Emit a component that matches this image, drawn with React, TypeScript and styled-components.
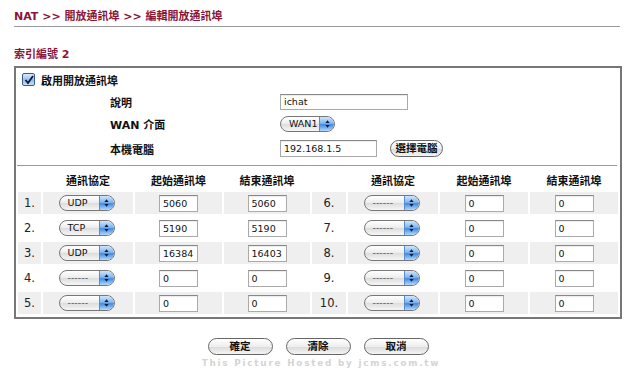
import React from 'react';
import styled, { createGlobalStyle } from 'styled-components';

const Global = createGlobalStyle`
  html, body {
    margin: 0;
    padding: 0;
    background: #fff;
  }
  body {
    font-family: "DejaVu Sans", "Noto Sans CJK TC", sans-serif;
    font-size: 11px;
    color: #111;
  }
`;

const Page = styled.div`
  width: 608px;
  padding: 9px 0 0 14px;
`;

const Title = styled.div`
  font-size: 11px;
  font-weight: bold;
  color: #8b1538;
  height: 15px;
  line-height: 15px;
  padding-bottom: 2px;
  border-bottom: 1px solid #9a9a9a;
  width: 606px;
`;

const SectionTitle = styled.div`
  margin-top: 20px;
  font-size: 11px;
  font-weight: bold;
  color: #8b1538;
  height: 15px;
  line-height: 15px;
`;

const Box = styled.div`
  margin-top: 4px;
  border: 2px solid #777;
`;

const CheckRow = styled.label`
  display: flex;
  align-items: center;
  gap: 6px;
  height: 23px;
  padding-left: 6px;
  font-weight: bold;
`;

const CheckBox = styled.span`
  width: 11px;
  height: 11px;
  border: 1px solid #3b5c8a;
  border-radius: 2px;
  background: linear-gradient(#d9ebfd, #8fbcec 55%, #c5e0fb);
  display: inline-flex;
  align-items: center;
  justify-content: center;
`;

const FormRow = styled.div<{ $h: number }>`
  display: flex;
  align-items: center;
  height: ${p => p.$h}px;
  padding-left: 94px;
`;

const Label = styled.div`
  width: 170px;
  font-weight: bold;
`;

const TextInput = styled.div<{ $w: number; $h?: number }>`
  width: ${p => p.$w}px;
  height: ${p => p.$h ?? 16}px;
  box-sizing: border-box;
  border: 1px solid #aaa;
  border-top-color: #888;
  background: #fff;
  font-size: 9.5px;
  line-height: ${p => (p.$h ?? 16) - 2}px;
  padding-left: 3px;
  text-align: left;
  box-shadow: inset 0 1px 1px rgba(0, 0, 0, 0.08);
`;

const Pill = styled.div<{ $w: number; $muted: boolean }>`
  position: relative;
  width: ${p => p.$w}px;
  height: 16px;
  box-sizing: border-box;
  border: 1px solid #777;
  border-radius: 8px;
  background: linear-gradient(#ffffff, #ececec 50%, #dcdcdc 51%, #f6f6f6);
  font-size: 9.5px;
  line-height: 14px;
  text-align: left;
  padding-left: 8px;
  overflow: hidden;
  white-space: nowrap;
  color: ${p => (p.$muted ? '#555' : '#111')};
`;

const Cap = styled.span`
  position: absolute;
  top: 0;
  right: 0;
  width: 14px;
  height: 14px;
  border-left: 1px solid #5a8ccc;
  border-radius: 0 7px 7px 0;
  background: linear-gradient(#cfe6fc, #7fb6f0 45%, #3f8ae2 55%, #b3d9fc);
  display: flex;
  align-items: center;
  justify-content: center;
`;

const AquaButton = styled.button<{ $w?: number }>`
  width: ${p => p.$w ?? 65}px;
  height: 17px;
  padding: 0;
  border: 1px solid #666;
  border-radius: 9px;
  background: linear-gradient(#ffffff, #eeeeee 50%, #dadada 51%, #f4f4f4);
  font-family: "DejaVu Sans", "Noto Sans CJK TC", sans-serif;
  font-size: 10.5px;
  font-weight: bold;
  color: #111;
  line-height: 15px;
`;

const Separator = styled.div`
  margin: 3px 3px 0 1px;
  border-top: 1px solid #999;
`;

const PortTable = styled.table`
  width: 604px;
  border-collapse: separate;
  border-spacing: 2px 3px;
  margin-top: 1px;
  table-layout: fixed;
`;

const Head = styled.th`
  height: 19px;
  font-weight: bold;
  font-size: 11px;
  text-align: center;
  padding: 0;
`;

const Cell = styled.td<{ $shade: boolean }>`
  height: 22px;
  padding: 0;
  background: ${p => (p.$shade ? '#efefef' : '#fff')};
  text-align: center;
  vertical-align: middle;
`;

const Num = styled.span`
  font-size: 11.5px;
  color: #222;
`;

const CellInner = styled.div<{ $shift?: number }>`
  display: flex;
  justify-content: center;
  margin-left: ${p => p.$shift ?? 0}px;
`;

const ButtonBar = styled.div`
  width: 608px;
  display: flex;
  justify-content: center;
  gap: 13px;
  margin-top: 19px;
`;

const Watermark = styled.div`
  width: 608px;
  text-align: center;
  margin-top: 3px;
  padding-left: 6px;
  box-sizing: border-box;
  font-size: 8.8px;
  font-weight: bold;
  letter-spacing: 1.8px;
  color: #d4d4d4;
`;

const Arrows = () => (
  <svg width="7" height="10" viewBox="0 0 7 10">
    <path d="M3.5 1.2 L5.6 4 L1.4 4 Z" fill="#0c1c33" />
    <path d="M3.5 8.8 L5.6 6 L1.4 6 Z" fill="#0c1c33" />
  </svg>
);

const Select = ({ value, w }: { value: string; w: number }) => (
  <Pill $w={w} $muted={value.startsWith('-')}>
    {value}
    <Cap>
      <Arrows />
    </Cap>
  </Pill>
);

type Rule = { proto: string; start: string; end: string };

const rules: Rule[] = [
  { proto: 'UDP', start: '5060', end: '5060' },
  { proto: 'TCP', start: '5190', end: '5190' },
  { proto: 'UDP', start: '16384', end: '16403' },
  { proto: '------', start: '0', end: '0' },
  { proto: '------', start: '0', end: '0' },
  { proto: '------', start: '0', end: '0' },
  { proto: '------', start: '0', end: '0' },
  { proto: '------', start: '0', end: '0' },
  { proto: '------', start: '0', end: '0' },
  { proto: '------', start: '0', end: '0' },
];

const RuleCells = ({ index, rule, shade }: { index: number; rule: Rule; shade: boolean }) => (
  <>
    <Cell $shade={shade}>
      <Num>{index}.</Num>
    </Cell>
    <Cell $shade={shade}>
      <CellInner $shift={-3}>
        <Select value={rule.proto} w={56} />
      </CellInner>
    </Cell>
    <Cell $shade={shade}>
      <CellInner>
        <TextInput $w={39} $h={17}>{rule.start}</TextInput>
      </CellInner>
    </Cell>
    <Cell $shade={shade}>
      <CellInner>
        <TextInput $w={39} $h={17}>{rule.end}</TextInput>
      </CellInner>
    </Cell>
  </>
);

export default function App() {
  return (
    <>
      <Global />
      <Page>
        <Title>NAT &gt;&gt; 開放通訊埠 &gt;&gt; 編輯開放通訊埠</Title>
        <SectionTitle>索引編號 2</SectionTitle>
        <Box>
          <CheckRow>
            <CheckBox>
              <svg width="10" height="10" viewBox="0 0 10 10">
                <path d="M1.5 5 L4 8 L9 1" stroke="#0b1a33" strokeWidth="1.8" fill="none" />
              </svg>
            </CheckBox>
            啟用開放通訊埠
          </CheckRow>
          <FormRow $h={22}>
            <Label>說明</Label>
            <TextInput $w={128}>ichat</TextInput>
          </FormRow>
          <FormRow $h={22}>
            <Label>WAN 介面</Label>
            <Select value="WAN1" w={55} />
          </FormRow>
          <FormRow $h={27}>
            <Label>本機電腦</Label>
            <TextInput $w={97} $h={17}>192.168.1.5</TextInput>
            <AquaButton $w={53} style={{ marginLeft: 13 }}>選擇電腦</AquaButton>
          </FormRow>
          <Separator />
          <PortTable>
            <colgroup>
              <col style={{ width: 23 }} />
              <col style={{ width: 90 }} />
              <col style={{ width: 87 }} />
              <col style={{ width: 86 }} />
              <col style={{ width: 34 }} />
              <col style={{ width: 90 }} />
              <col style={{ width: 88 }} />
              <col style={{ width: 88 }} />
            </colgroup>
            <thead>
              <tr>
                <Head />
                <Head>通訊協定</Head>
                <Head>起始通訊埠</Head>
                <Head>結束通訊埠</Head>
                <Head />
                <Head>通訊協定</Head>
                <Head>起始通訊埠</Head>
                <Head>結束通訊埠</Head>
              </tr>
            </thead>
            <tbody>
              {[0, 1, 2, 3, 4].map(i => (
                <tr key={i}>
                  <RuleCells index={i + 1} rule={rules[i]} shade={i % 2 === 0} />
                  <RuleCells index={i + 6} rule={rules[i + 5]} shade={i % 2 === 0} />
                </tr>
              ))}
            </tbody>
          </PortTable>
        </Box>
        <ButtonBar>
          <AquaButton>確定</AquaButton>
          <AquaButton>清除</AquaButton>
          <AquaButton>取消</AquaButton>
        </ButtonBar>
        <Watermark>This Picture Hosted by jcms.com.tw</Watermark>
      </Page>
    </>
  );
}
